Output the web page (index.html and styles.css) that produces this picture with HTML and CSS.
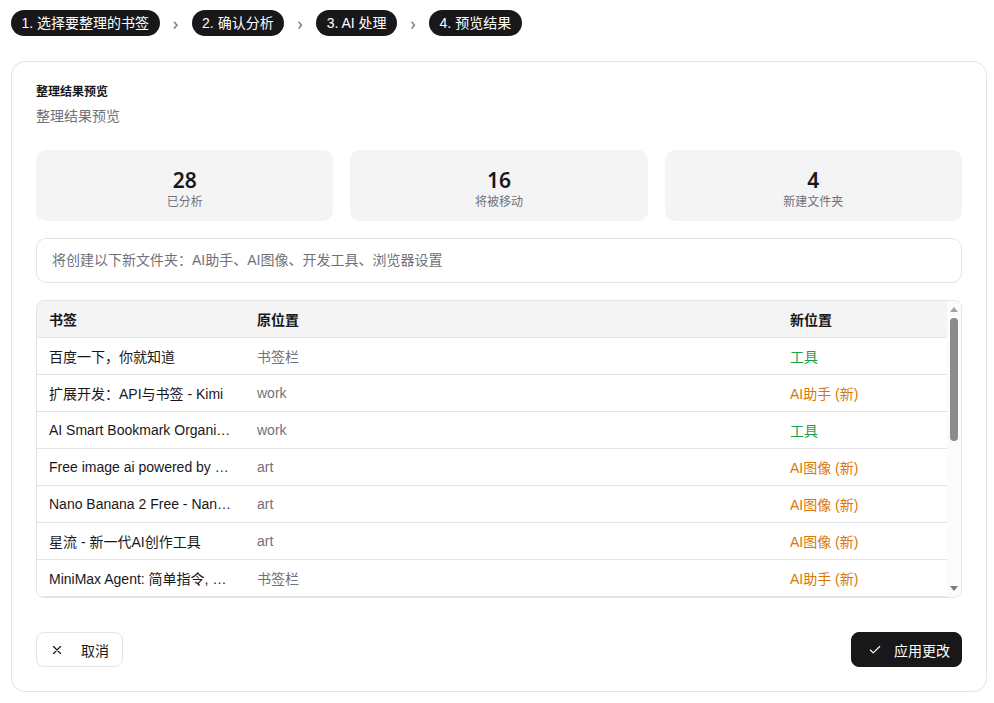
FILE: index.html
```html
<!DOCTYPE html>
<html lang="zh-CN">
<head>
  <meta charset="UTF-8">
  <meta name="viewport" content="width=device-width, initial-scale=1.0">
  <title>整理结果预览</title>
  <link rel="stylesheet" href="styles.css">
</head>
<body>

<nav class="steps">
  <span class="step">1. 选择要整理的书签</span>
  <span class="chevron">›</span>
  <span class="step">2. 确认分析</span>
  <span class="chevron">›</span>
  <span class="step">3. AI 处理</span>
  <span class="chevron">›</span>
  <span class="step">4. 预览结果</span>
</nav>

<div class="card">
  <div class="card-title">整理结果预览</div>
  <div class="card-desc">整理结果预览</div>

  <div class="stats">
    <div class="stat">
      <div class="stat-num">28</div>
      <div class="stat-label">已分析</div>
    </div>
    <div class="stat">
      <div class="stat-num">16</div>
      <div class="stat-label">将被移动</div>
    </div>
    <div class="stat">
      <div class="stat-num">4</div>
      <div class="stat-label">新建文件夹</div>
    </div>
  </div>

  <div class="notice">将创建以下新文件夹：AI助手、AI图像、开发工具、浏览器设置</div>

  <div class="table-wrap">
    <div class="table-scroll">
      <table class="moves">
        <colgroup>
          <col class="col-name">
          <col>
          <col class="col-new">
        </colgroup>
        <thead>
          <tr><th>书签</th><th>原位置</th><th>新位置</th></tr>
        </thead>
        <tbody>
          <tr><td>百度一下，你就知道</td><td class="old">书签栏</td><td class="tag-old">工具</td></tr>
          <tr><td>扩展开发：API与书签 - Kimi</td><td class="old">work</td><td class="tag-new">AI助手 (新)</td></tr>
          <tr><td>AI Smart Bookmark Organizer</td><td class="old">work</td><td class="tag-old">工具</td></tr>
          <tr><td>Free image ai powered by Gemini</td><td class="old">art</td><td class="tag-new">AI图像 (新)</td></tr>
          <tr><td>Nano Banana 2 Free - Nano Banana AI</td><td class="old">art</td><td class="tag-new">AI图像 (新)</td></tr>
          <tr><td>星流 - 新一代AI创作工具</td><td class="old">art</td><td class="tag-new">AI图像 (新)</td></tr>
          <tr><td>MiniMax Agent: 简单指令, 即刻完成</td><td class="old">书签栏</td><td class="tag-new">AI助手 (新)</td></tr>
          <tr><td>GitHub - chrome-extensions-samples</td><td class="old">work</td><td class="tag-new">开发工具 (新)</td></tr>
          <tr><td>Chrome Extensions API Reference</td><td class="old">work</td><td class="tag-new">开发工具 (新)</td></tr>
          <tr><td>chrome://settings</td><td class="old">书签栏</td><td class="tag-new">浏览器设置 (新)</td></tr>
        </tbody>
      </table>
    </div>
    <div class="scrollbar">
      <span class="sb-up"></span>
      <span class="sb-thumb"></span>
      <span class="sb-down"></span>
    </div>
  </div>

  <div class="actions">
    <button class="btn btn-ghost">
      <svg width="14" height="14" viewBox="0 0 24 24" fill="none" stroke="currentColor" stroke-width="2" stroke-linecap="round"><path d="M18 6 6 18M6 6l12 12"/></svg>
      <span>取消</span>
    </button>
    <button class="btn btn-dark">
      <svg width="14" height="14" viewBox="0 0 24 24" fill="none" stroke="currentColor" stroke-width="2" stroke-linecap="round" stroke-linejoin="round"><path d="M20 6 9 17l-5-5"/></svg>
      <span>应用更改</span>
    </button>
  </div>
</div>

</body>
</html>
```

FILE: styles.css
```css
body {
  margin: 0;
  padding: 10px 7px 11px 11px;
  font-family: "Liberation Sans", "Noto Sans CJK SC", sans-serif;
  color: #18181b;
  background-color: #fff;
}

.steps {
  display: flex;
  align-items: center;
  gap: 10px;
  height: 26px;
}

.step {
  background-color: #18181b;
  color: #fff;
  font-size: 14px;
  line-height: 26px;
  padding: 0 10.5px;
  border-radius: 13px;
  white-space: nowrap;
}

.chevron {
  color: #71717a;
  font-family: "Noto Sans", sans-serif;
  font-size: 18px;
  line-height: 26px;
  width: 12px;
  text-align: center;
}

.card {
  margin-top: 25px;
  border: 1px solid #e4e4e7;
  border-radius: 14px;
  padding: 22px 24px 24px;
}

.card-title {
  font-size: 12px;
  font-weight: bold;
  line-height: 16px;
}

.card-desc {
  margin-top: 6px;
  font-size: 14px;
  line-height: 20px;
  color: #71717a;
}

.stats {
  display: grid;
  grid-template-columns: 1fr 1fr 1fr;
  gap: 17px;
  margin-top: 24px;
}

.stat {
  background-color: #f4f4f5;
  border-radius: 10px;
  text-align: center;
  padding: 16px 12px 11px;
}

.stat-num {
  font-family: "Noto Sans", sans-serif;
  font-size: 21px;
  line-height: 28px;
  font-weight: 600;
}

.stat-label {
  font-size: 12px;
  line-height: 16px;
  color: #71717a;
}

.notice {
  margin-top: 17px;
  border: 1px solid #e4e4e7;
  border-radius: 10px;
  padding: 12px 15px;
  font-size: 14px;
  line-height: 19px;
  color: #71717a;
}

.table-wrap {
  display: flex;
  margin-top: 17px;
  height: 296px;
  overflow: hidden;
  border: 1px solid #e4e4e7;
  border-radius: 8px;
}

.table-scroll {
  flex: 1;
  overflow: hidden;
}

.scrollbar {
  display: flex;
  flex-direction: column;
  align-items: center;
  width: 14px;
  background-color: #fbfbfb;
}

.sb-up,
.sb-down {
  width: 0;
  height: 0;
  border-left: 4px solid transparent;
  border-right: 4px solid transparent;
}

.sb-up {
  margin-top: 6px;
  border-bottom: 5px solid #a3a3a3;
}

.sb-thumb {
  margin-top: 6px;
  width: 8px;
  height: 123px;
  border-radius: 4px;
  background-color: #8b8b8b;
}

.sb-down {
  margin-top: auto;
  margin-bottom: 6px;
  border-top: 5px solid #7a7a7a;
}

.moves {
  width: 100%;
  border-collapse: collapse;
  table-layout: fixed;
  font-size: 14px;
}

.col-name {
  width: 208px;
}

.col-new {
  width: 169px;
}

.moves th,
.moves td {
  height: 36px;
  padding: 0 12px;
  text-align: left;
  border-bottom: 1px solid #e4e4e7;
  white-space: nowrap;
  overflow: hidden;
  text-overflow: ellipsis;
}

.moves th {
  background-color: #f4f4f5;
  font-weight: bold;
}

.moves td.old {
  color: #71717a;
}

.moves td.tag-old {
  color: #16a34a;
}

.moves td.tag-new {
  color: #d97706;
}

.actions {
  display: flex;
  justify-content: space-between;
  margin-top: 34px;
}

.btn {
  display: flex;
  align-items: center;
  height: 35px;
  border-radius: 8px;
  font-family: inherit;
  font-size: 14px;
  cursor: pointer;
}

.btn-ghost {
  background-color: #fff;
  color: #18181b;
  border: 1px solid #e4e4e7;
  padding: 0 13px;
  gap: 17px;
}

.btn-dark {
  background-color: #18181b;
  color: #fff;
  border: 1px solid #18181b;
  padding: 0 11px 0 16px;
  gap: 12px;
}
```
